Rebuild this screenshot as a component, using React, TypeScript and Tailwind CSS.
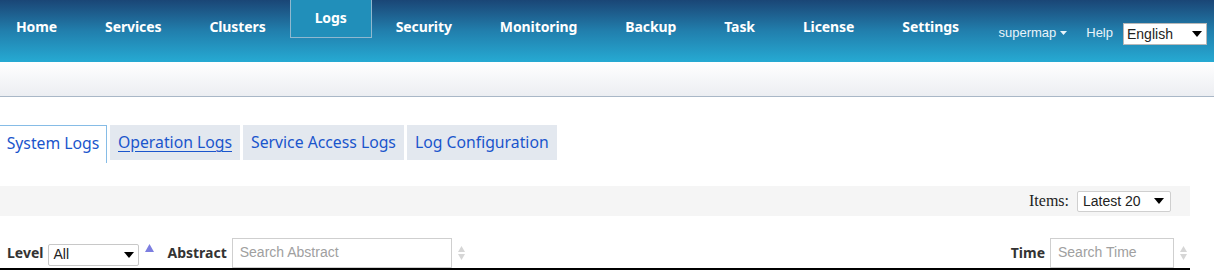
const navItems = ['Home', 'Services', 'Clusters', 'Logs', 'Security', 'Monitoring', 'Backup', 'Task', 'License', 'Settings'];
const tabs = ['System Logs', 'Operation Logs', 'Service Access Logs', 'Log Configuration'];

function Caret() {
  return (
    <svg width="10" height="6" viewBox="0 0 10 6" className="shrink-0">
      <path d="M0 0h10L5 6z" fill="#000" />
    </svg>
  );
}

function SortIcon() {
  return (
    <svg width="9" height="16" viewBox="0 0 9 16" className="shrink-0">
      <path d="M4.5 1L8 7H1z" fill="#d6d6d6" />
      <path d="M4.5 15L8 9H1z" fill="#d6d6d6" />
    </svg>
  );
}

export default function App() {
  return (
    <div className="w-[1214px] h-[272px] overflow-hidden bg-white font-['Noto_Sans',sans-serif]">
      {/* top bar */}
      <header className="h-[62px] flex items-start bg-gradient-to-b from-[#1a4676] via-[#217fad] to-[#26aad3]">
        <nav className="flex h-full shrink-0">
          {navItems.map((item, i) => {
            const active = item === 'Logs';
            return (
              <div
                key={item}
                className={
                  (i === 0 ? 'pl-4 pr-6 ' : 'px-6 ') +
                  (active
                    ? 'h-[38px] border border-t-0 border-[#8fb8cf] bg-[#218fba] flex items-center pb-[3px] '
                    : 'h-full flex items-center pb-[9px] ') +
                  'text-white font-bold text-[14px] tracking-[-0.1px]'
                }
              >
                {item}
              </div>
            );
          })}
        </nav>
        <div className="ml-auto shrink-0 flex items-center h-full pt-[6px] pr-[7px] font-['Liberation_Sans',sans-serif] text-[13px] text-[#e9f4fa]">
          <span className="flex items-center gap-[4px] mr-[19px] mb-[3px]">
            supermap
            <svg width="7" height="4" viewBox="0 0 7 4">
              <path d="M0 0h7L3.5 4z" fill="#e9f4fa" />
            </svg>
          </span>
          <span className="mr-[10px] mb-[3px]">Help</span>
          <div className="w-[84px] h-[22px] bg-white border border-[#b8b8b8] flex items-center justify-between pl-[3px] pr-[4px] text-[14px] text-[#222]">
            English
            <Caret />
          </div>
        </div>
      </header>

      {/* sub band */}
      <div className="h-[35px] bg-gradient-to-b from-white to-[#eceef2] border-b border-[#a9b7c7]" />

      {/* tabs */}
      <div className="flex items-start gap-[3px] mt-[28px] text-[15.75px] text-[#1a55cc]">
        <div className="h-[38px] w-[107px] bg-white border border-l-0 border-b-0 border-[#86bce6] flex items-center justify-center pb-[1px]">
          {tabs[0]}
        </div>
        {tabs.slice(1).map((t) => (
          <div
            key={t}
            className={
              'h-[35px] bg-[#e3e8ef] flex items-center px-[8px] pt-[1px] ' +
              (t === 'Operation Logs' ? 'underline underline-offset-[3px]' : '')
            }
          >
            {t}
          </div>
        ))}
      </div>

      {/* toolbar */}
      <div className="mt-[23px] w-[1190px] h-[30px] bg-[#f5f5f5] flex items-center justify-end pr-[19px]">
        <span className="font-['Liberation_Serif',serif] text-[16px] text-[#222] mr-[8px]">Items:</span>
        <div className="w-[94px] h-[21px] bg-white border border-[#cfcfcf] rounded-[2px] flex items-center justify-between pl-[5px] pr-[6px] font-['Liberation_Sans',sans-serif] text-[14px] text-[#222]">
          Latest 20
          <Caret />
        </div>
      </div>

      {/* table header */}
      <div className="mt-[21px] w-[1190px] h-[33px] border-b-2 border-black flex items-center text-[14px] text-[#333]">
        <span className="font-bold ml-[7px] mr-[5px]">Level</span>
        <div className="w-[91px] h-[22px] mt-[4px] bg-white border border-[#c8c8c8] rounded-[2px] flex items-center justify-between pl-[4px] pr-[4px] font-['Liberation_Sans',sans-serif] text-[14px] text-[#222]">
          All
          <Caret />
        </div>
        <svg width="9" height="8" viewBox="0 0 9 8" className="ml-[6px] mb-[10px]">
          <path d="M4.5 0L9 8H0z" fill="#7c7ee0" />
        </svg>
        <span className="font-bold ml-[13px] mr-[5px]">Abstract</span>
        <div className="w-[220px] h-[30px] border border-[#cfcfcf] flex items-center pl-[7px] font-['Liberation_Sans',sans-serif] text-[14px] text-[#a0a0a0]">
          Search Abstract
        </div>
        <span className="ml-[5px]">
          <SortIcon />
        </span>
        <span className="ml-auto font-bold mr-[5px]">Time</span>
        <div className="w-[124px] h-[30px] border border-[#cfcfcf] flex items-center pl-[7px] font-['Liberation_Sans',sans-serif] text-[14px] text-[#a0a0a0]">
          Search Time
        </div>
        <span className="ml-[5px] mr-[2px]">
          <SortIcon />
        </span>
      </div>
    </div>
  );
}
